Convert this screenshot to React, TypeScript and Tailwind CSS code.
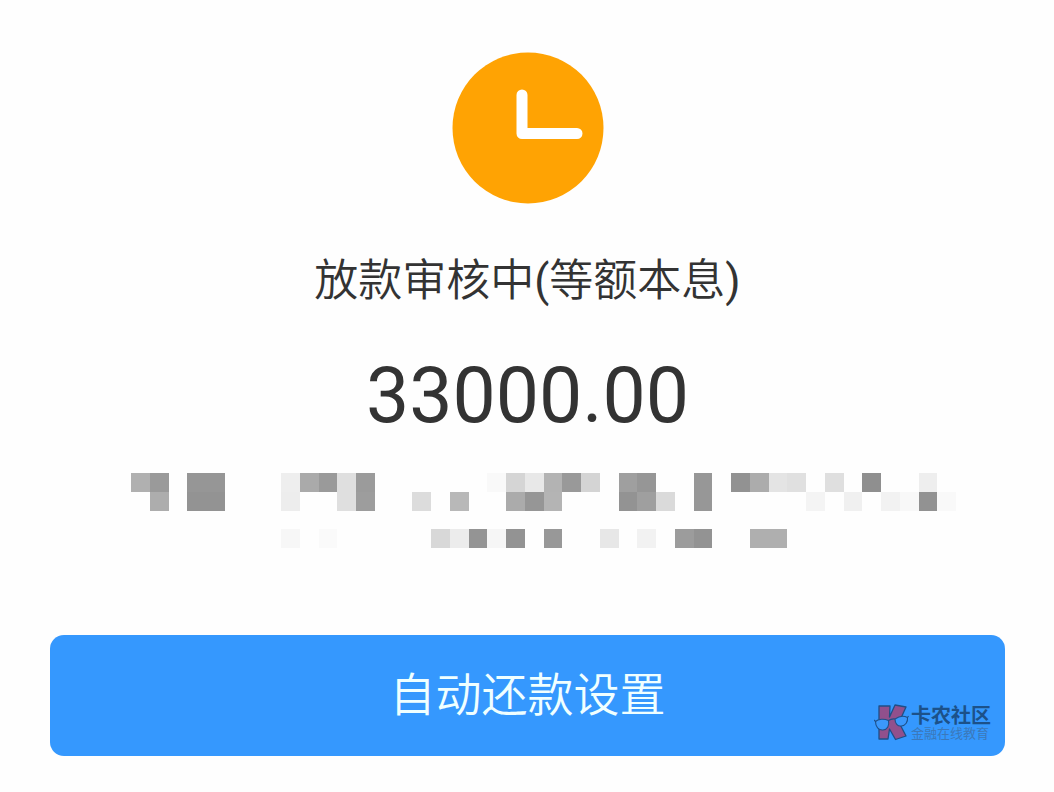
type Cell = [column: number, shade: string];

const CELL = 18.75;

const mosaicRows: { row: number; cells: Cell[] }[] = [
  {
    row: 0,
    cells: [
      [0, '#b0b0b0'], [1, '#9a9a9a'], [3, '#969696'], [4, '#969696'], [8, '#eeeeee'],
      [9, '#aaaaaa'], [10, '#9a9a9a'], [11, '#dfdfdf'], [12, '#9b9b9b'], [19, '#f9f9f9'],
      [20, '#d5d5d5'], [21, '#e8e8e8'], [22, '#b3b3b3'], [23, '#999999'], [24, '#d4d4d4'],
      [26, '#9f9f9f'], [27, '#969696'], [30, '#979797'], [32, '#929292'], [33, '#acacac'],
      [34, '#e4e4e4'], [35, '#e0e0e0'], [37, '#dfdfdf'], [39, '#8f8f8f'], [42, '#eeeeee'],
    ],
  },
  {
    row: 1,
    cells: [
      [1, '#adadad'], [3, '#939393'], [4, '#939393'], [8, '#ededed'], [11, '#dfdfdf'],
      [12, '#9d9d9d'], [15, '#dcdcdc'], [17, '#b8b8b8'], [20, '#ababab'], [21, '#969696'],
      [22, '#b4b4b4'], [26, '#939393'], [27, '#9f9f9f'], [28, '#dadada'], [30, '#979797'],
      [36, '#f4f4f4'], [38, '#f0f0f0'], [40, '#f2f2f2'], [41, '#f8f8f8'], [42, '#929292'],
      [43, '#f9f9f9'],
    ],
  },
  {
    row: 3,
    cells: [
      [8, '#f7f7f7'], [10, '#fafafa'], [16, '#d8d8d8'], [17, '#ececec'], [18, '#949494'],
      [19, '#f6f6f6'], [20, '#939393'], [22, '#989898'], [25, '#e7e7e7'], [27, '#f2f2f2'],
      [29, '#9c9c9c'], [30, '#939393'], [33, '#afafaf'], [34, '#afafaf'],
    ],
  },
];

function ClockIcon() {
  return (
    <svg viewBox="0 0 152 152" className="size-[152px]" aria-hidden="true">
      <circle cx="76" cy="76" r="75.5" fill="#ffa303" />
      <path
        d="M70 43v38.5h55"
        fill="none"
        stroke="#fff"
        strokeWidth="11"
        strokeLinecap="round"
        strokeLinejoin="round"
      />
    </svg>
  );
}

function MaskedDetails() {
  return (
    <svg viewBox="-32 0 858 75" className="w-[858px] max-w-full" shapeRendering="crispEdges" aria-hidden="true">
      {mosaicRows.map(({ row, cells }) =>
        cells.map(([column, shade]) => (
          <rect
            key={`${row}-${column}`}
            x={column * CELL}
            y={row * CELL}
            width={CELL}
            height={CELL}
            fill={shade}
          />
        )),
      )}
    </svg>
  );
}

function CommunityLogo() {
  return (
    <svg viewBox="0 0 36 38" className="h-[38px] w-9" aria-hidden="true">
      <path
        d="M5 2h11l-.5 11L21 1l11 2-7 15.500L32 32l-10.500 3.500L15.500 25l-1.500 10H5z"
        fill="#91508c"
        stroke="#1f4f86"
        strokeWidth="1.3"
        strokeLinejoin="round"
      />
      <g fill="#3b98fb" stroke="#1f4f86" strokeWidth="1.1" strokeLinejoin="round">
        <path d="M1.500 17.500C4 15 10 14.500 14.500 16.500c1 5-1 9-5.500 9.500S1.500 22.500 1.500 17.500z" />
        <path d="M21 15c3.500-2.500 8.500-3.500 12.500-1.500 .5 4.500-2 8-6 8.500s-6.500-2.500-6.500-7z" />
        <path d="M0 16l1.500 1.500M14.500 16.500q3-2 6.500-1.500M33.500 13.500l1-1.500" fill="none" />
      </g>
    </svg>
  );
}

export default function App() {
  return (
    <main className="flex min-h-screen flex-col items-center bg-[#fefefe] pt-[52px] pr-[49px] pb-9 pl-[50px] font-[Roboto,'Noto_Sans_CJK_SC',sans-serif] text-[#333]">
      <ClockIcon />
      <h1 className="mt-11 text-center text-[44px] leading-[66px] font-[350]">
        放款审核中<span className="font-normal">(</span>等额本息<span className="font-normal">)</span>
      </h1>
      <p className="mt-9 text-center text-[77px] leading-[92px]">33000.00</p>
      <div className="mt-[31px] flex w-full justify-center">
        <MaskedDetails />
      </div>
      <div className="relative mt-[87px] w-full">
        <button
          type="button"
          className="h-[121px] w-full rounded-[14px] bg-[#3598fe] text-[46px] font-[350] text-[#f0ffff]"
        >
          自动还款设置
        </button>
        <div className="pointer-events-none absolute right-3.5 bottom-3.5 flex items-end gap-px">
          <CommunityLogo />
          <div className="flex flex-col">
            <span className="text-[20px] leading-5 font-bold text-[#1c5189]">卡农社区</span>
            <span className="text-[13px] leading-4 text-[#3b78ba]">金融在线教育</span>
          </div>
        </div>
      </div>
    </main>
  );
}
